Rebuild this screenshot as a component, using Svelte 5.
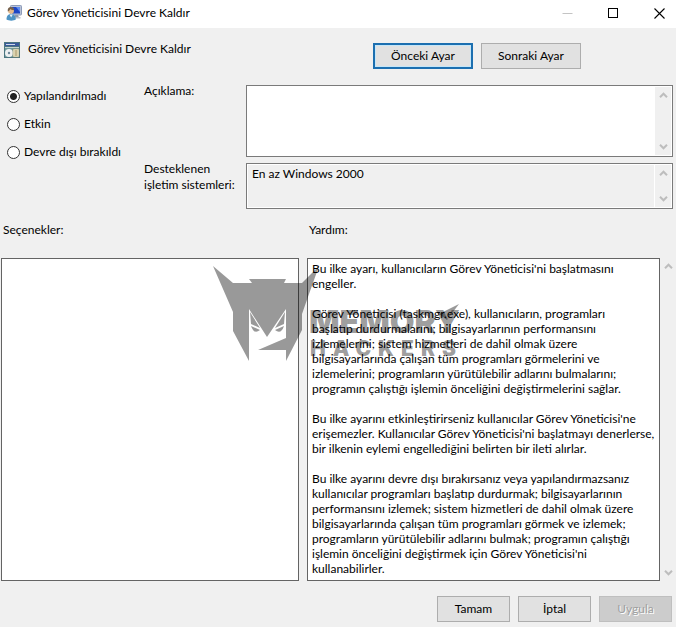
<script lang="ts">
  type PolicyState = 'none' | 'enabled' | 'disabled'

  const title = 'Görev Yöneticisini Devre Kaldır'

  const states: { value: PolicyState; label: string }[] = [
    { value: 'none', label: 'Yapılandırılmadı' },
    { value: 'enabled', label: 'Etkin' },
    { value: 'disabled', label: 'Devre dışı bırakıldı' },
  ]

  let selected = $state<PolicyState>('none')
  let comment = $state('')

  const supportedOn = 'En az Windows 2000'

  const helpLines = [
    'Bu ilke ayarı, kullanıcıların Görev Yöneticisi\'ni başlatmasını',
    'engeller.',
    '',
    'Görev Yöneticisi (taskmgr.exe), kullanıcıların, programları',
    'başlatıp durdurmalarını; bilgisayarlarının performansını',
    'izlemelerini; sistem hizmetleri de dahil olmak üzere',
    'bilgisayarlarında çalışan tüm programları görmelerini ve',
    'izlemelerini; programların yürütülebilir adlarını bulmalarını;',
    'programın çalıştığı işlemin önceliğini değiştirmelerini sağlar.',
    '',
    'Bu ilke ayarını etkinleştirirseniz kullanıcılar Görev Yöneticisi\'ne',
    'erişemezler. Kullanıcılar Görev Yöneticisi\'ni başlatmayı denerlerse,',
    'bir ilkenin eylemi engellediğini belirten bir ileti alırlar.',
    '',
    'Bu ilke ayarını devre dışı bırakırsanız veya yapılandırmazsanız',
    'kullanıcılar programları başlatıp durdurmak; bilgisayarlarının',
    'performansını izlemek; sistem hizmetleri de dahil olmak üzere',
    'bilgisayarlarında çalışan tüm programları görmek ve izlemek;',
    'programların yürütülebilir adlarını bulmak; programın çalıştığı',
    'işlemin önceliğini değiştirmek için Görev Yöneticisi\'ni',
    'kullanabilirler.',
  ]
  const helpText = helpLines.join('\n')
</script>

{#snippet scrollbar()}
  <div class="scrollbar">
    <button class="scroll-btn" aria-label="Yukarı kaydır">
      <svg width="9" height="7" viewBox="0 0 9 7"><path d="M1 5.2 L4.5 1.7 L8 5.2" /></svg>
    </button>
    <button class="scroll-btn" aria-label="Aşağı kaydır">
      <svg width="9" height="7" viewBox="0 0 9 7"><path d="M1 1.8 L4.5 5.3 L8 1.8" /></svg>
    </button>
  </div>
{/snippet}

<div class="dialog">
  <header class="titlebar">
    <svg class="icon" width="16" height="16" viewBox="0 0 16 16" aria-hidden="true">
      <rect x="4.5" y="0.5" width="11" height="9.5" rx="0.8" fill="#b9c3d8" stroke="#8d9bb8" />
      <rect x="6" y="2" width="8" height="6.5" fill="#1d46c4" />
      <path d="M10 2h4v5z" fill="#5f8df0" />
      <path d="M9 10h3l1 2.5h-5z" fill="#8f99ab" />
      <rect x="8" y="12" width="6.5" height="1.5" fill="#b5bdca" />
      <path d="M0.5 14.5c0-4 2-5.5 4.5-5.5s4.8 1.5 4.8 5.5c-2 1.5-7 1.5-9.3 0z" fill="#4d93c4" />
      <path d="M3.5 9.5l1.7 3 1.6-3z" fill="#e8f2f8" />
      <circle cx="5" cy="5.8" r="3" fill="#e3b98c" />
      <path d="M1.8 6.5c-.4-3.500 1.500-4.500 3.400-4.400 2 .1 3 1.400 2.900 3-1.500.2-3-.2-4-1-.3 1.400-1 2-2.300 2.400z" fill="#75604c" />
    </svg>
    <span class="caption">{title}</span>
    <div class="window-btns">
      <button class="win-btn" aria-label="Simge durumuna küçült" disabled>
        <svg width="11" height="11" viewBox="0 0 11 11"><path d="M0.5 5.5h10" stroke="#c4c4c4" /></svg>
      </button>
      <button class="win-btn" aria-label="Ekranı kapla">
        <svg width="11" height="11" viewBox="0 0 11 11"><rect x="0.5" y="0.5" width="9" height="9" fill="none" stroke="#000" /></svg>
      </button>
      <button class="win-btn" aria-label="Kapat">
        <svg width="11" height="11" viewBox="0 0 11 11"><path d="M0.5 0.5l10 10M10.5 0.5l-10 10" stroke="#000" stroke-width="1.1" /></svg>
      </button>
    </div>
  </header>

  <div class="policy-head">
    <svg class="icon" width="16" height="16" viewBox="0 0 16 16" aria-hidden="true">
      <rect width="16" height="16" fill="#4b7480" />
      <rect x="1" y="1" width="14" height="3" fill="#3a5a9c" />
      <rect x="2" y="2" width="9" height="1" fill="#cfdbe8" />
      <rect x="1" y="5" width="14" height="10" fill="#6f9a9c" />
      <rect x="1" y="5" width="14" height="1" fill="#c9d6d2" />
      <circle cx="5" cy="11" r="4" fill="#eef0f2" />
      <circle cx="5" cy="11" r="1.2" fill="#6d8797" />
      <rect x="9" y="7" width="6" height="8" fill="#f6efcf" stroke="#8b8a67" stroke-width="0.6" />
      <path d="M10.5 9h3M10.5 11h3M10.5 13h3" stroke="#8d7d4c" />
    </svg>
    <h1>{title}</h1>
    <div class="nav-btns">
      <button class="btn focused">Önceki Ayar</button>
      <button class="btn">Sonraki Ayar</button>
    </div>
  </div>

  <div class="settings">
    <div class="states" role="radiogroup" aria-label={title}>
      {#each states as s}
        <label class="state">
          <input type="radio" name="state" value={s.value} bind:group={selected} />
          <span>{s.label}</span>
        </label>
      {/each}
    </div>

    <label class="field-label" for="comment">Açıklama:</label>
    <div class="box">
      <textarea id="comment" class="comment" bind:value={comment}></textarea>
      {@render scrollbar()}
    </div>

    <label class="field-label" for="supported">Desteklenen işletim sistemleri:</label>
    <div class="box">
      <textarea id="supported" class="supported" readonly value={supportedOn}></textarea>
      {@render scrollbar()}
    </div>
  </div>

  <div class="panes">
    <span class="pane-label">Seçenekler:</span>
    <label class="pane-label help-label" for="help">Yardım:</label>
    <div class="options"></div>
    <textarea id="help" class="help" rows={helpLines.length} readonly value={helpText}></textarea>
    {@render scrollbar()}

    <svg class="watermark" width="250" height="98" viewBox="0 0 250 98" aria-hidden="true">
      <path
        d="M0 0 L20 17 H39 L36 13 H73 L71 17 H89 L106 0 L96 28 L89 48 V64 L73 95 V84 H45 L73 72 V43 L54 71 L36 43 V95 L20 65 V46 Z"
      />
      <path d="M37 46 L47 62 L38 58 Z M38 60 L47 64 Q41 69 38 60 Z M72 46 L62 62 L71 58 Z M71 60 L62 64 Q68 69 71 60 Z" />
      <path d="M226 48 L246 38 L234 54 Z" />
      <text class="brand" x="96" y="67">MEMORY</text>
      <text class="brand-sub" x="97" y="90">HACKERS</text>
    </svg>
  </div>

  <footer class="actions">
    <button class="btn">Tamam</button>
    <button class="btn">İptal</button>
    <button class="btn" disabled>Uygula</button>
  </footer>
</div>

<style>
  :global(body) {
    background: #f0f0f0;
  }

  .dialog {
    background: #f0f0f0;
    color: #000;
    font-family: Lato, 'Open Sans', sans-serif;
    font-size: 12px;
    line-height: 16px;
  }

  button, textarea, input {
    font: inherit;
    color: inherit;
    margin: 0;
    box-sizing: border-box;
  }

  .icon {
    display: block;
    flex: none;
  }

  .titlebar {
    display: flex;
    align-items: center;
    gap: 5px;
    height: 28px;
    padding: 0 11px 2px 6px;
    box-sizing: border-box;
    background: #fff;
  }
  .caption { flex: 1; }

  .window-btns {
    display: flex;
    gap: 35px;
  }
  .win-btn {
    display: block;
    width: 11px;
    height: 11px;
    padding: 0;
    border: 0;
    background: none;
  }
  .win-btn svg { display: block; }

  .policy-head {
    display: flex;
    align-items: flex-start;
    gap: 8px;
    padding: 14px 95px 14px 4px;
  }
  .policy-head h1 {
    flex: 1;
    margin: 0;
    font-size: 12px;
    font-weight: 400;
    line-height: 13px;
  }
  .nav-btns {
    display: flex;
    gap: 8px;
    padding-top: 1px;
  }

  .btn {
    width: 73px;
    height: 26px;
    padding: 0;
    border: 1px solid #adadad;
    background: #e1e1e1;
  }
  .btn:hover { border-color: #0078d7; }
  .btn.focused { border: 2px solid #1c6fb0; box-shadow: inset 0 0 0 1px #c5e6f8; }
  .btn:disabled {
    border-color: #bfbfbf;
    background: #ccc;
    color: #a0a0a0;
    text-shadow: 1px 1px 0 #fff;
  }
  .nav-btns .btn { width: 100px; }

  .settings {
    display: grid;
    grid-template-columns: 137px 102px 1fr;
    row-gap: 4px;
    padding: 0 3px 0 7px;
  }

  .states {
    grid-row: 1 / 3;
    display: flex;
    flex-direction: column;
    gap: 12px;
    padding-top: 5px;
  }
  .state {
    display: flex;
    align-items: center;
    gap: 4px;
    white-space: nowrap;
  }
  .state input {
    appearance: none;
    width: 13px;
    height: 13px;
    border: 1px solid #333;
    border-radius: 50%;
    background: #fff;
  }
  .state input:checked {
    background: radial-gradient(circle, #222 0 3px, #fff 4px);
  }

  .field-label { padding-right: 8px; }

  .box {
    display: flex;
    gap: 1px;
    margin-top: 2px;
    padding: 1px;
    border: 1px solid #7a7a7a;
    background: #fff;
  }
  .box textarea {
    flex: 1;
    min-width: 0;
    padding: 1px 4px;
    border: 0;
    outline: 0;
    resize: none;
    overflow: hidden;
    background: #fff;
  }
  .box .comment { height: 68px; }
  .box .supported { height: 42px; background: #f0f0f0; }

  .scrollbar {
    display: flex;
    flex-direction: column;
    justify-content: space-between;
    width: 16px;
    background: #f0f0f0;
  }
  .scroll-btn {
    display: flex;
    align-items: center;
    justify-content: center;
    height: 17px;
    padding: 0;
    border: 0;
    background: none;
  }
  .scroll-btn path {
    fill: none;
    stroke: #bdbdbd;
    stroke-width: 2;
  }

  .panes {
    position: relative;
    display: grid;
    grid-template-columns: 298fr 8px 353fr 16px;
    padding: 13px 0 0 1px;
  }
  .pane-label {
    padding: 0 0 20px 2px;
  }
  .help-label { grid-column: 3 / 5; }

  .options, .help {
    border: 1px solid #646464;
    background: #fff;
  }
  .options { grid-column: 1; }
  .help {
    grid-column: 3;
    min-width: 0;
    width: 100%;
    display: block;
    padding: 2px 0 4px 4px;
    line-height: 15px;
    resize: none;
    outline: 0;
    overflow: hidden;
    white-space: pre;
  }

  .watermark {
    position: absolute;
    left: 213px;
    top: 57px;
    fill: rgba(0, 0, 0, 0.4);
    pointer-events: none;
  }
  .brand {
    font: 900 32px Inter, 'Open Sans', sans-serif;
  }
  .brand-sub {
    font: 900 21px Inter, 'Open Sans', sans-serif;
    letter-spacing: 7px;
  }

  .actions {
    display: flex;
    justify-content: flex-end;
    gap: 8px;
    padding: 15px 4px 5px;
  }
</style>
